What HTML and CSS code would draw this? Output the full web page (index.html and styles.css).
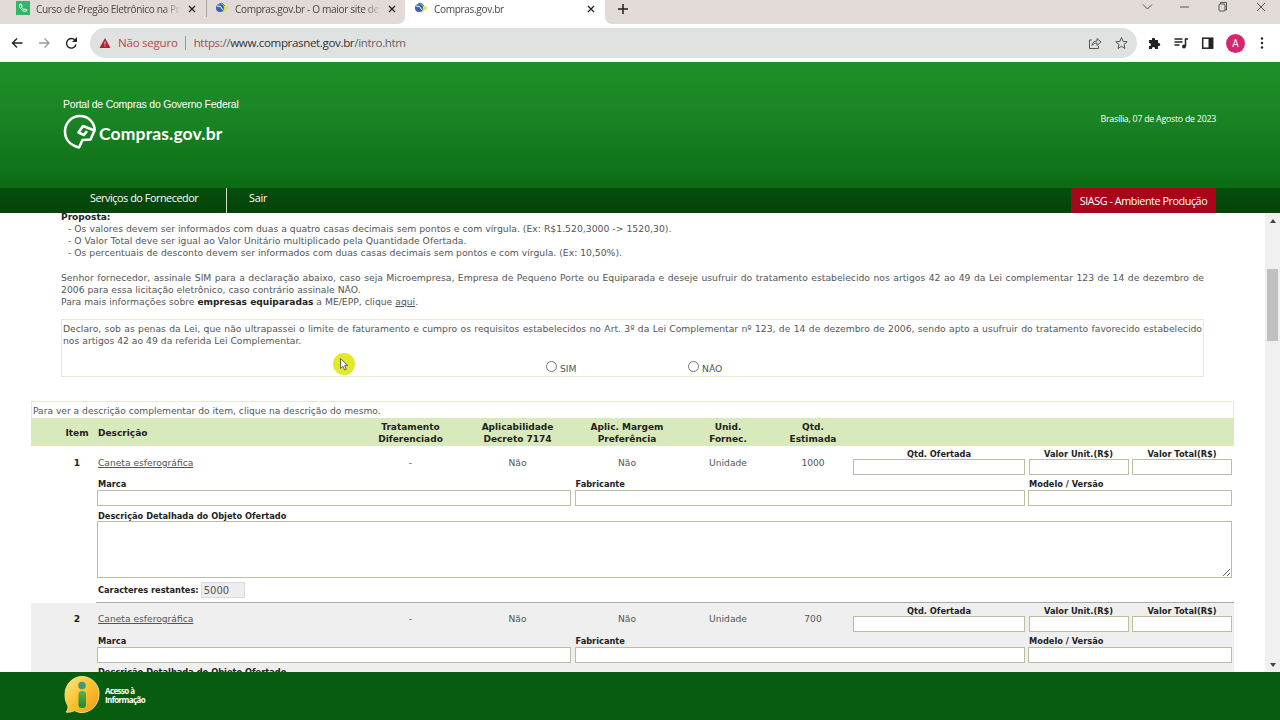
FILE: index.html
```html
<!DOCTYPE html>
<html lang="pt-BR">
<head>
  <meta charset="UTF-8">
  <meta name="viewport" content="width=device-width, initial-scale=1.0">
  <title>Compras.gov.br</title>
  <link rel="stylesheet" href="styles.css">
</head>
<body>

<div class="tabs">
  <div class="tab tab-first">
    <svg class="favicon" viewBox="0 0 14 14"><rect width="14" height="14" fill="#2fb865"/><path d="M4 3c-1 1-1 3 1 5s4 3 5.500 2l.5-1-2-1-1 .6C7 8 5.800 7 5.500 6l.6-1L5 3z" fill="none" stroke="#fff"/></svg>
    <span class="tab-title t1">Curso de Pregão Eletrônico na Pr</span>
    <svg class="close" viewBox="0 0 8 8"><path d="M1 1l6 6M7 1L1 7"/></svg>
  </div>
  <div class="tab tab-second">
    <svg class="favicon" viewBox="0 0 14 14"><path d="M6 2l8 5-7 5z" fill="#e8dc5a"/><circle cx="5" cy="7" r="4" fill="#3b62b5"/><path d="M2 5q4-1 6 4" stroke="#fff" fill="none"/><path d="M4 3l3-1 3 3" stroke="#5a7f70" fill="none"/></svg>
    <span class="tab-title t2">Compras.gov.br - O maior site de</span>
    <svg class="close" viewBox="0 0 8 8"><path d="M1 1l6 6M7 1L1 7"/></svg>
  </div>
  <div class="tab tab-active">
    <svg class="favicon" viewBox="0 0 14 14"><path d="M6 2l8 5-7 5z" fill="#e8dc5a"/><circle cx="5" cy="7" r="4" fill="#3b62b5"/><path d="M2 5q4-1 6 4" stroke="#fff" fill="none"/><path d="M4 3l3-1 3 3" stroke="#5a7f70" fill="none"/></svg>
    <span class="tab-title t3">Compras.gov.br</span>
    <svg class="close" viewBox="0 0 8 8"><path d="M1 1l6 6M7 1L1 7"/></svg>
  </div>
  <div class="tab-rest">
    <svg class="plus" viewBox="0 0 12 12"><path d="M6 1v10M1 6h10"/></svg>
    <svg class="win" viewBox="0 0 130 14">
      <path d="M7 4.500l4.500 4.500L16 4.500"/>
      <path d="M44 7h9"/>
      <rect x="83" y="4" width="6" height="7" rx="1"/><path d="M84.500 4V2.500h6v7.500H89"/>
      <path d="M121 3l8 8M129 3l-8 8"/>
    </svg>
  </div>
</div>

<div class="toolbar">
  <svg class="nav-icons" viewBox="0 0 70 16">
    <path d="M11.500 8H1.500M6 3.500L1.500 8 6 12.500" stroke="#222"/>
    <path d="M28 8h10M33.500 3.500L38 8l-4.500 4.500" stroke="#999"/>
    <path d="M64 5.200A4.800 4.800 0 1 0 65 9.500" stroke="#222"/><path d="M66 2v5h-5z" fill="#222"/>
  </svg>
  <div class="address">
    <svg class="warning" viewBox="0 0 12 12"><path d="M6 1l5.500 10H.5z" fill="#b3202c"/><path d="M6 4.500v3M6 8.500v1" stroke="#e5dada"/></svg>
    <span class="unsafe">Não seguro</span>
    <span class="divider"></span>
    <span class="url"><span class="scheme">https:</span>//<span class="host">www.comprasnet.gov.br</span>/intro.htm</span>
    <svg class="share" viewBox="0 0 42 14">
      <path d="M4 4H1.500v8.500h9V10M4 9.500c.5-3 2-4.500 5-4.500V2.500L13 6 9 9.500V7C7 7 5.500 7.500 4 9.500z"/>
      <path d="M33.500 1.500l1.600 3.900 4.100.3-3.200 2.700 1 4.100-3.500-2.200-3.500 2.200 1-4.100-3.200-2.700 4.100-.3z"/>
    </svg>
  </div>
  <svg class="extensions" viewBox="0 0 66 14">
    <path d="M1 4h3c-.8-3 3.800-3 3 0h3v3c3-.8 3 3.800 0 3v3H7c.6-2.700-3.600-2.700-3 0H1v-3c2.500.6 2.500-3.600 0-3z" fill="#222"/>
    <path d="M26.500 3h8M26.500 6h8M26.500 9h5M37.500 10V3H40" fill="none" stroke="#222" stroke-width="1.500"/><circle cx="36" cy="10.500" r="1.900" fill="#222"/>
    <rect x="54.700" y="2.200" width="10" height="10" fill="none" stroke="#222" stroke-width="1.500"/><rect x="60.500" y="2" width="4" height="10" fill="#222"/>
  </svg>
  <span class="avatar">A</span>
  <svg class="kebab" viewBox="0 0 4 14"><circle cx="2" cy="2.500" r="1.200"/><circle cx="2" cy="7" r="1.200"/><circle cx="2" cy="11.500" r="1.200"/></svg>
</div>

<header class="header">
  <div class="brand">
    <p>Portal de Compras do Governo Federal</p>
    <div class="logo">
      <svg viewBox="0 0 34 36"><path d="M31.800 16.500C31.500 8 25 2 17 2 8.500 2 2 9 2 17.500S8 31.500 16 33.500l3.500-7.500 8-.5 4-9-11.500-4.500-4.500 6.500 5.500 2.500 3-4" fill="none" stroke="#fff" stroke-width="2.600" stroke-linejoin="round"/></svg>
      <span>Compras.gov.br</span>
    </div>
  </div>
  <p class="date">Brasília, 07 de Agosto de 2023</p>
</header>

<nav class="menu">
  <a class="supplier">Serviços do Fornecedor</a>
  <a class="exit">Sair</a>
  <span class="env">SIASG - Ambiente Produção</span>
</nav>

<div class="page">
  <div class="content">
    <div class="notes">
      <b class="title">Proposta:</b>
      <p class="note n1">- Os valores devem ser informados com duas a quatro casas decimais sem pontos e com vírgula. (Ex: R$1.520,3000 -&gt; 1520,30).</p>
      <p class="note n2">- O Valor Total deve ser igual ao Valor Unitário multiplicado pela Quantidade Ofertada.</p>
      <p class="note n3">- Os percentuais de desconto devem ser informados com duas casas decimais sem pontos e com vírgula. (Ex: 10,50%).</p>
      <p class="intro">Senhor fornecedor, assinale SIM para a declaração abaixo, caso seja Microempresa, Empresa de Pequeno Porte ou Equiparada e deseje usufruir do tratamento estabelecido nos artigos 42 ao 49 da Lei complementar 123 de 14 de dezembro de 2006&nbsp;para essa licitação eletrônico, caso contrário assinale NÃO.</p>
      <p>Para mais informações sobre <b>empresas equiparadas</b> a ME/EPP, clique <u>aqui</u>.</p>
    </div>

    <div class="declaration">
      <p>Declaro, sob as penas da Lei, que não ultrapassei o limite de faturamento e cumpro os requisitos estabelecidos no Art. 3º da Lei Complementar nº 123, de 14 de dezembro de 2006, sendo apto a usufruir do tratamento favorecido estabelecido nos&nbsp;artigos 42 ao 49 da referida Lei Complementar.</p>
      <div class="choices">
        <label><input type="radio" name="me"><span>SIM</span></label>
        <label><input type="radio" name="me"><span>NÃO</span></label>
      </div>
      <svg class="cursor" viewBox="0 0 24 24"><circle cx="12" cy="12" r="11" fill="#e2ea27"/><path d="M8.500 6.500v10l2.400-2.200 1.700 3.700 1.700-.8-1.700-3.600h3.300z" fill="#fff" stroke="#555" stroke-width=".9"/></svg>
    </div>

    <div class="items">
      <p class="hint">Para ver a descrição complementar do item, clique na descrição do mesmo.</p>
      <div class="cols head">
        <span class="num">Item</span>
        <span class="desc">Descrição</span>
        <span>Tratamento<br>Diferenciado</span>
        <span>Aplicabilidade<br>Decreto 7174</span>
        <span>Aplic. Margem<br>Preferência</span>
        <span>Unid.<br>Fornec.</span>
        <span>Qtd.<br>Estimada</span>
      </div>

      <div class="item">
        <div class="cols">
          <b class="num">1</b>
          <u class="desc">Caneta esferográfica</u>
          <span>-</span><span>Não</span><span>Não</span><span>Unidade</span><span>1000</span>
          <div class="values">
            <label>Qtd. Ofertada<input type="text"></label>
            <label>Valor Unit.(R$)<input type="text"></label>
            <label>Valor Total(R$)<input type="text"></label>
          </div>
        </div>
        <div class="details">
          <div class="brandrow">
            <label>Marca<input type="text"></label>
            <label>Fabricante<input type="text"></label>
            <label>Modelo / Versão<input type="text"></label>
          </div>
          <label class="full">Descrição Detalhada do Objeto Ofertado<textarea></textarea></label>
          <div class="count"><b>Caracteres restantes:</b><span>5000</span></div>
        </div>
      </div>

      <div class="item alt">
        <div class="cols">
          <b class="num">2</b>
          <u class="desc">Caneta esferográfica</u>
          <span>-</span><span>Não</span><span>Não</span><span>Unidade</span><span>700</span>
          <div class="values">
            <label>Qtd. Ofertada<input type="text"></label>
            <label>Valor Unit.(R$)<input type="text"></label>
            <label>Valor Total(R$)<input type="text"></label>
          </div>
        </div>
        <div class="details">
          <div class="brandrow">
            <label>Marca<input type="text"></label>
            <label>Fabricante<input type="text"></label>
            <label>Modelo / Versão<input type="text"></label>
          </div>
          <label class="full">Descrição Detalhada do Objeto Ofertado<textarea></textarea></label>
        </div>
      </div>
    </div>
  </div>
  <div class="scrollbar">
    <i class="up"></i>
    <div class="thumb"></div>
    <i class="down"></i>
  </div>
</div>

<footer class="footer">
  <svg viewBox="0 0 36 40">
    <defs>
      <linearGradient id="gold" x2="1" y2="1"><stop stop-color="#ffe58a"/><stop offset=".5" stop-color="#f8c22d"/><stop offset="1" stop-color="#ec981c"/></linearGradient>
      <linearGradient id="leaf" y2="1" x2="0"><stop stop-color="#5fae46"/><stop offset="1" stop-color="#168a35"/></linearGradient>
    </defs>
    <path d="M18 1.500a17 17 0 0 1 17 18c0 10-8 18-17 18-3 0-5-.5-7.500-2C8 37 5 37.500 2 37c2-2 2.200-4 2-6C2 28 1 24 1 19.500 1 9 9 1.500 18 1.500z" fill="url(#gold)" stroke="#f9dc82"/>
    <circle cx="18" cy="10.500" r="3.800" fill="#3f9a7c"/>
    <rect x="14.500" y="16" width="7.500" height="17" rx="3.500" fill="url(#leaf)"/>
  </svg>
  <p>Acesso à<br>Informação</p>
</footer>

</body>
</html>
```

FILE: styles.css
```css
* {
  box-sizing: border-box;
}
body {
  margin: 0;
  width: 1280px;
  height: 720px;
  overflow: hidden;
  background: #fff;
  font-family: "DejaVu Sans", Verdana, sans-serif;
  font-size: 9.24px;
  line-height: 12.15px;
  color: #555;
}
p {
  margin: 0;
}
svg {
  display: block;
  flex: none;
}

/* browser */
.tabs {
  display: flex;
  height: 24px;
  background: #fff;
  font: 10.1px/16px "Open Sans", sans-serif;
  letter-spacing: -.35px;
  color: #4a4646;
}
.tab {
  display: flex;
  align-items: flex-start;
  padding-top: 1px;
  background: #e2dad6;
}
.tab-first {
  width: 206px;
  padding-left: 16px;
}
.tab-second {
  width: 199px;
  padding-left: 9px;
  border-radius: 0 0 7px 0;
  position: relative;
}
.tab-second::before {
  content: "";
  position: absolute;
  left: 0;
  top: 0;
  width: 1px;
  height: 17px;
  background: #aaa4a2;
}
.tab-active {
  width: 200px;
  padding-left: 9px;
  background: #fff;
}
.favicon {
  width: 14px;
  height: 14px;
  margin-right: 6px;
}
.tab-title {
  width: 146px;
  height: 16px;
  white-space: nowrap;
  -webkit-mask-image: linear-gradient(90deg, #000 88%, transparent);
}
.t1 {
  width: 145px;
}
.close {
  width: 8px;
  height: 8px;
  margin: 4px 0 0 7px;
  stroke: #222;
  stroke-width: 1.3;
}
.tab-rest {
  flex: 1;
  display: flex;
  justify-content: space-between;
  padding: 3px 14px 0 12px;
  background: #e2dad6;
  border-radius: 0 0 0 7px;
}
.plus {
  width: 12px;
  height: 12px;
  stroke: #222;
  stroke-width: 1.5;
}
.win {
  width: 130px;
  height: 14px;
  margin-top: -3px;
  fill: none;
  stroke: #555;
}
.toolbar {
  display: flex;
  align-items: center;
  height: 38px;
  padding-left: 11px;
}
.nav-icons {
  width: 70px;
  height: 16px;
  fill: none;
  stroke-width: 1.4;
}
.address {
  display: flex;
  align-items: center;
  width: 1047px;
  height: 30px;
  margin-left: 9px;
  padding-left: 9px;
  border-radius: 15px;
  background: #e0e1e1;
  font: 11.6px/20px "Open Sans", sans-serif;
  letter-spacing: -.37px;
}
.warning {
  width: 12px;
  height: 12px;
}
.unsafe {
  margin-left: 7px;
  letter-spacing: -.27px;
  color: #b04a50;
}
.divider {
  width: 1px;
  height: 14px;
  margin: 0 8px 0 7px;
  background: #999;
}
.url {
  color: #666;
}
.scheme {
  color: #a84a52;
}
.host {
  color: #333;
}
.share {
  width: 42px;
  height: 14px;
  margin-left: auto;
  margin-right: 7px;
  fill: none;
  stroke: #555;
}
.extensions {
  width: 66px;
  height: 14px;
  margin-left: 11px;
}
.avatar {
  width: 19px;
  height: 19px;
  margin-left: 12px;
  border-radius: 50%;
  background: #d9256f;
  color: #fff;
  text-align: center;
  font: 10px/19px Roboto, sans-serif;
}
.kebab {
  width: 4px;
  height: 14px;
  margin-left: 15px;
  fill: #222;
}

/* portal header */
.header {
  display: flex;
  justify-content: space-between;
  height: 126px;
  padding: 36px 64px 0 63px;
  background: linear-gradient(#1e8f2a, #1a8425 45%, #0b6c14);
  color: #fff;
}
.brand p {
  font: 10.5px/13px "Liberation Sans", Arial, sans-serif;
  letter-spacing: -.23px;
}
.logo {
  display: flex;
  align-items: center;
  margin-top: 3px;
  font: bold 17.5px/20px Lato, sans-serif;
}
.logo span {
  letter-spacing: .15px;
  margin-top: 3px;
}
.logo svg {
  width: 34px;
  height: 36px;
  margin-right: 2px;
}
.date {
  margin-top: 14px;
  font: 500 8.8px/14px "Open Sans", sans-serif;
  letter-spacing: -.24px;
}
.menu {
  display: flex;
  height: 25px;
  padding-right: 64px;
  background: linear-gradient(#064f0c, #05430a);
  color: #fff;
  font: 500 10.8px/20px "Open Sans", sans-serif;
  letter-spacing: -.44px;
}
.supplier {
  width: 227px;
  padding-left: 90px;
  border-right: 1px solid #cfe0cf;
}
.exit {
  padding-left: 22px;
  letter-spacing: -.2px;
}
.env {
  width: 145px;
  margin-left: auto;
  background: #a90419;
  text-align: center;
  line-height: 26px;
}

/* page */
.page {
  display: flex;
  height: 459px;
  overflow: hidden;
}
.content {
  width: 1265px;
  padding-left: 31px;
}
.notes {
  width: 1143px;
  margin: -2px 0 0 30px;
}
.notes b {
  color: #222;
  font-size: 9.05px;
}
.note {
  padding-left: 7px;
}
.n1 {
  font-size: 9.29px;
}
.intro {
  margin-top: 12.15px;
  text-align: justify;
}
.declaration {
  position: relative;
  width: 1143px;
  height: 58px;
  margin: 11px 0 0 30px;
  padding: 3px 1px 0;
  border: 1px solid #e4edcf;
  text-align: justify;
}
.cursor {
  position: absolute;
  left: 270px;
  top: 32px;
  width: 24px;
  height: 24px;
}
.choices {
  display: flex;
  padding: 13px 0 0 482px;
}
.choices label {
  display: flex;
  width: 142px;
}
.choices input {
  width: 11px;
  height: 11px;
  margin: 0 3px 0 1px;
}
.choices span {
  margin-top: 2px;
}
.items {
  width: 1203px;
  margin-top: 24px;
  font-size: 9.15px;
}
.hint {
  height: 17px;
  padding: 3px 1px 0;
  border: 1px solid #e4edcf;
  border-bottom: 0;
}
.cols {
  display: grid;
  grid-template-columns: 66px 261px 105px 109px 110px 92px 78px 379px;
  align-items: center;
  text-align: center;
}
.num {
  padding-left: 26px;
  color: #222;
}
.desc {
  padding-left: 1px;
  text-align: left;
}
.head {
  height: 28px;
  padding-top: 1px;
  background: #d8eabb;
  color: #222;
  font-size: 9px;
  font-weight: bold;
}
.item {
  height: 156.5px;
}
.item .cols {
  height: 32px;
}
.item .cols > :not(.values) {
  padding-top: 1px;
}
.alt {
  background: #efefef;
}
.values {
  display: grid;
  grid-template-columns: 172px 100px 100px;
  gap: 3.5px;
  padding: 0 0 1px 1px;
}
.item label {
  display: block;
  font-size: 8.26px;
  font-weight: bold;
  color: #222;
}
.item input {
  display: block;
  width: 100%;
  height: 16px;
  border: 1px solid #b9bf9f;
  background: #fff;
}
.item .values input {
  margin-top: -1px;
}
.details {
  width: 1201px;
  padding-left: 66px;
}
.details label {
  text-indent: 1px;
}
.brandrow {
  display: grid;
  grid-template-columns: 474px 450px 204px;
  gap: 3.5px;
}
.full {
  padding-top: 3.5px;
}
.item textarea {
  display: block;
  width: 100%;
  height: 57px;
  margin-top: -1px;
  border: 1px solid #b9bf9f;
  background: #fff;
}
.count {
  display: flex;
  align-items: center;
  height: 25px;
  margin: 0 -2px 0 -1px;
  padding-left: 2px;
  border-bottom: 1px solid #aaa;
}
.count b {
  font-size: 8.24px;
  color: #222;
}
.count span {
  width: 44px;
  height: 16px;
  margin-left: 2px;
  padding-left: 2px;
  border: 1px solid #d9dbdd;
  background: #ebedee;
  font-size: 10px;
  line-height: 15px;
}
.scrollbar {
  display: flex;
  flex-direction: column;
  align-items: center;
  width: 15px;
  padding: 6px 0 5px;
  background: #f0f0f0;
}
.up {
  border: 3px solid transparent;
  border-top: 0;
  border-bottom: 4px solid #444;
}
.thumb {
  width: 11px;
  height: 72px;
  margin: 46px 0 auto;
  background: #c0c0c0;
}
.down {
  border: 3px solid transparent;
  border-bottom: 0;
  border-top: 4px solid #444;
}

.footer {
  display: flex;
  height: 48px;
  padding: 3px 0 0 64px;
  background: #085c10;
  color: #fff;
  font: bold 8px/9px "Open Sans", sans-serif;
  letter-spacing: -.6px;
}
.footer svg {
  width: 36px;
  height: 40px;
  margin-right: 5px;
}
.footer p {
  margin-top: 11px;
}
```
